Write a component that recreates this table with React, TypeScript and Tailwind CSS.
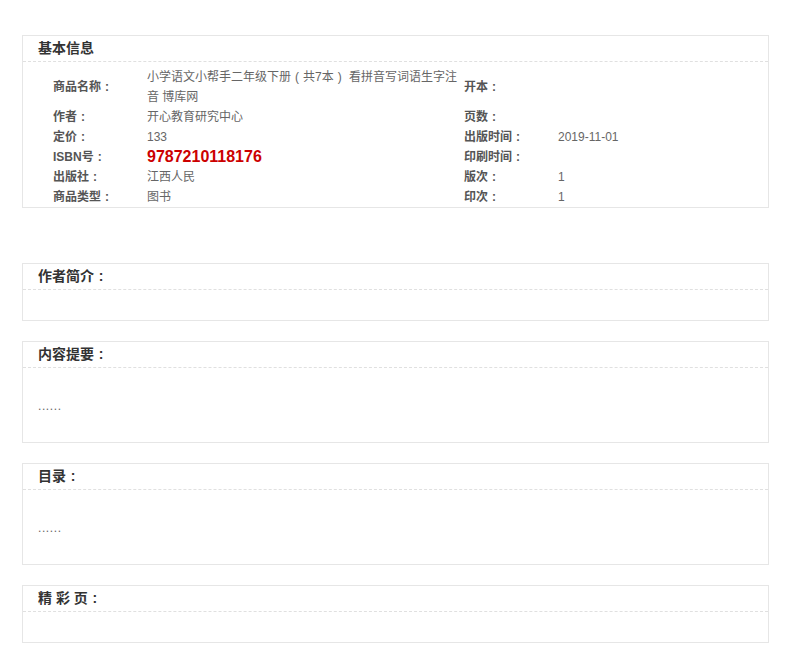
import React from 'react';

const font = 'font-["Liberation_Sans","Noto_Sans_CJK_SC",sans-serif]';

// fullwidth punctuation sits centred in its em box, as in the reference
const PUNCT: Record<string, string> = { '：': ':', '（': '(', '）': ')' };

function T({ s }: { s: string }) {
  return (
    <>
      {s.split(/([：（）])/).map((p, i) =>
        PUNCT[p] ? (
          <span key={i} className="inline-block w-[1em] text-center">{PUNCT[p]}</span>
        ) : (
          <React.Fragment key={i}>{p}</React.Fragment>
        )
      )}
    </>
  );
}

function Panel({ title, children, bodyClass }: { title: string; children?: React.ReactNode; bodyClass: string }) {
  return (
    <div className="border border-[#e6e6e6] bg-white">
      <div className="h-[26px] border-b border-dashed border-[#e0e0e0] pl-[15px] text-[14px] leading-[25px] font-bold text-[#333]">
        <T s={title} />
      </div>
      <div className={bodyClass}>{children}</div>
    </div>
  );
}

const rows: [string, React.ReactNode, string, string][] = [
  ['作者：', '开心教育研究中心', '页数：', ''],
  ['定价：', '133', '出版时间：', '2019-11-01'],
  ['ISBN号：', <span className="text-[16px] font-bold text-[#cc0000]">9787210118176</span>, '印刷时间：', ''],
  ['出版社：', '江西人民', '版次：', '1'],
  ['商品类型：', '图书', '印次：', '1'],
];

export default function App() {
  return (
    <div className={`min-h-screen bg-white pt-[35px] pl-[22px] text-[12px] ${font}`}>
      <div className="w-[747px] flex flex-col">
        {/* 基本信息 */}
        <div className="border border-[#e6e6e6] bg-white">
          <div className="h-[26px] border-b border-dashed border-[#e0e0e0] pl-[15px] text-[14px] leading-[25px] font-bold text-[#333]">
            基本信息
          </div>
          <div className="pt-[5px] pl-[30px] grid grid-cols-[94px_317px_94px_1fr] leading-[20px]">
            <div className="flex items-center font-bold text-[#555]"><span><T s="商品名称：" /></span></div>
            <div className="text-[#666]"><T s="小学语文小帮手二年级下册（共7本） 看拼音写词语生字注音 博库网" /></div>
            <div className="flex items-center font-bold text-[#555]"><span><T s="开本：" /></span></div>
            <div className="text-[#666]"></div>
            {rows.map(([l1, v1, l2, v2]) => (
              <React.Fragment key={l1}>
                <div className="h-[20px] font-bold text-[#555]"><T s={l1} /></div>
                <div className="h-[20px] flex items-center text-[#666]">{v1}</div>
                <div className="h-[20px] font-bold text-[#555]"><T s={l2} /></div>
                <div className="h-[20px] text-[#666]">{v2}</div>
              </React.Fragment>
            ))}
          </div>
        </div>

        <div className="mt-[55px] flex flex-col gap-[20px]">
          <Panel title="作者简介：" bodyClass="h-[30px]" />
          <Panel title="内容提要：" bodyClass="h-[74px] pt-[28px] pl-[15px] leading-[20px] tracking-[0.6px] text-[#666]">
            ......
          </Panel>
          <Panel title="目录：" bodyClass="h-[74px] pt-[28px] pl-[15px] leading-[20px] tracking-[0.6px] text-[#666]">
            ......
          </Panel>
          <Panel title="精 彩 页：" bodyClass="h-[30px]" />
        </div>
      </div>
    </div>
  );
}
